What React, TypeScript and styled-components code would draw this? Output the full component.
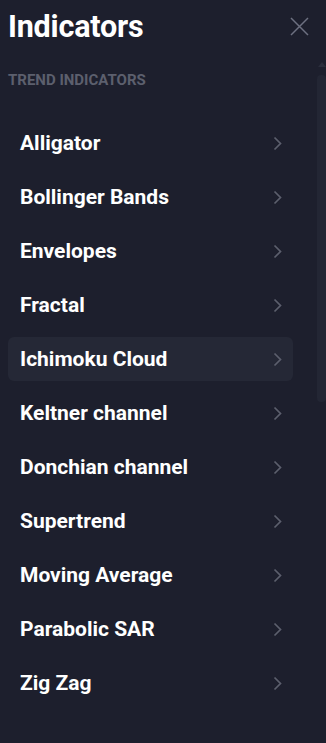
import React from 'react'
import styled, { createGlobalStyle } from 'styled-components'

const items = [
  'Alligator',
  'Bollinger Bands',
  'Envelopes',
  'Fractal',
  'Ichimoku Cloud',
  'Keltner channel',
  'Donchian channel',
  'Supertrend',
  'Moving Average',
  'Parabolic SAR',
  'Zig Zag',
]

const GlobalStyle = createGlobalStyle`
  html, body {
    margin: 0;
    padding: 0;
    background: #1d1f2d;
  }
  body {
    font-family: Roboto, 'Liberation Sans', sans-serif;
    color: #ffffff;
  }
`

function Chevron() {
  return (
    <svg width="11" height="15" viewBox="0 0 11 15" fill="none">
      <path d="M2.5 1.5L8.5 7.5l-6 6" stroke="#5c5f6d" strokeWidth="1.7" />
    </svg>
  )
}

function CloseIcon() {
  return (
    <svg width="19" height="19" viewBox="0 0 19 19" fill="none">
      <path d="M1 1l17 17M18 1L1 18" stroke="#6d7080" strokeWidth="1.5" />
    </svg>
  )
}

function App() {
  return (
    <Panel>
      <GlobalStyle />
      <Header>
        <Title>Indicators</Title>
        <CloseButton>
          <CloseIcon />
        </CloseButton>
      </Header>
      <Body>
        <Section>Trend indicators</Section>
        <List>
          {items.map((name) => (
            <Item key={name} $active={name === 'Ichimoku Cloud'}>
              <span>{name}</span>
              <Chevron />
            </Item>
          ))}
        </List>
        <Scrollbar>
          <ScrollArrow />
          <ScrollThumb />
        </Scrollbar>
      </Body>
    </Panel>
  )
}

export default App

const Panel = styled.div`
  width: 326px;
  height: 743px;
  background: #1d1f2d;
  overflow: hidden;
`

const Header = styled.div`
  display: flex;
  align-items: center;
  justify-content: space-between;
  padding: 8px 17px 0 8px;
  height: 36px;
`

const Title = styled.h1`
  margin: 0;
  font-size: 30.5px;
  font-weight: 700;
  letter-spacing: -0.2px;
`

const CloseButton = styled.button`
  display: flex;
  padding: 0;
  border: 0;
  background: none;
`

const Body = styled.div`
  position: relative;
  padding: 28px 0 0 8px;
`

const Section = styled.div`
  font-size: 15px;
  font-weight: 700;
  text-transform: uppercase;
  color: #5c5f6d;
  line-height: 16px;
`

const List = styled.div`
  display: flex;
  flex-direction: column;
  gap: 10px;
  width: 285px;
  margin-top: 33px;
`

const Item = styled.div<{ $active?: boolean }>`
  display: flex;
  align-items: center;
  justify-content: space-between;
  height: 44px;
  padding: 0 10px 0 12px;
  box-sizing: border-box;
  border-radius: 6px;
  background: ${(p) => (p.$active ? '#252836' : 'transparent')};
  font-size: 21px;
  font-weight: 700;
  color: #ffffff;
`

const Scrollbar = styled.div`
  position: absolute;
  top: 18px;
  right: 0;
  width: 9px;
`

const ScrollArrow = styled.div`
  width: 0;
  height: 0;
  margin: 0 auto;
  border-left: 4px solid transparent;
  border-right: 4px solid transparent;
  border-bottom: 5px solid #2b2e3c;
`

const ScrollThumb = styled.div`
  margin-top: 8px;
  height: 327px;
  border-radius: 4px;
  background: #232634;
`
